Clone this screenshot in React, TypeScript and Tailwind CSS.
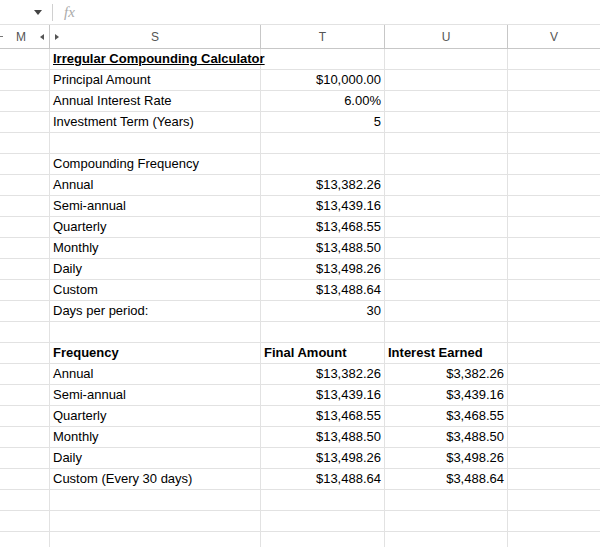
const rows: [string, string, string, boolean?][] = [
  ["Irregular Compounding Calculator", "", "", true],
  ["Principal Amount", "$10,000.00", ""],
  ["Annual Interest Rate", "6.00%", ""],
  ["Investment Term (Years)", "5", ""],
  ["", "", ""],
  ["Compounding Frequency", "", ""],
  ["Annual", "$13,382.26", ""],
  ["Semi-annual", "$13,439.16", ""],
  ["Quarterly", "$13,468.55", ""],
  ["Monthly", "$13,488.50", ""],
  ["Daily", "$13,498.26", ""],
  ["Custom", "$13,488.64", ""],
  ["Days per period:", "30", ""],
  ["", "", ""],
  ["Frequency", "Final Amount", "Interest Earned"],
  ["Annual", "$13,382.26", "$3,382.26"],
  ["Semi-annual", "$13,439.16", "$3,439.16"],
  ["Quarterly", "$13,468.55", "$3,468.55"],
  ["Monthly", "$13,488.50", "$3,488.50"],
  ["Daily", "$13,498.26", "$3,498.26"],
  ["Custom (Every 30 days)", "$13,488.64", "$3,488.64"],
  ["", "", ""],
  ["", "", ""],
  ["", "", ""],
];

export default function App() {
  return (
    <div className="w-[600px] h-[547px] overflow-hidden bg-white text-[13px] text-black" style={{ fontFamily: '"Liberation Sans", Arial, sans-serif' }}>
      <div className="h-[25px] flex items-center border-b border-[#e2e2e2]">
        <div className="w-[52px] flex justify-end pr-[10px]">
          <svg width="8" height="5" viewBox="0 0 8 5"><path d="M0 0h8L4 5z" fill="#444" /></svg>
        </div>
        <div className="w-px h-[17px] bg-[#d0d0d0]" />
        <span className="ml-[11px] text-[#aaa] italic text-[15px]" style={{ fontFamily: '"Liberation Serif", serif' }}>fx</span>
      </div>
      <div className="grid grid-cols-[50px_211px_124px_123px_1fr] h-[24px] text-[#555] text-[12px] border-b border-[#c7c7c7]">
        <div className="relative border-r border-[#c7c7c7] flex items-center">
          <span className="absolute left-0 top-[11px] w-[3px] h-px bg-[#777]" />
          <span className="ml-[16px]">M</span>
          <svg className="absolute left-[40px] top-[9px]" width="4" height="6" viewBox="0 0 4 6"><path d="M4 0v6L0 3z" fill="#555" /></svg>
        </div>
        <div className="relative border-r border-[#c7c7c7] flex items-center justify-center">
          <svg className="absolute left-[5px] top-[9px]" width="4" height="6" viewBox="0 0 4 6"><path d="M0 0v6l4-3z" fill="#555" /></svg>
          S
        </div>
        <div className="border-r border-[#c7c7c7] flex items-center justify-center">T</div>
        <div className="border-r border-[#c7c7c7] flex items-center justify-center">U</div>
        <div className="flex items-center justify-center">V</div>
      </div>
      {rows.map((r, i) => {
        const bold = i === 14;
        return (
          <div key={i} className="grid grid-cols-[50px_211px_124px_123px_1fr] h-[21px] border-b border-[#e2e2e2]">
            <div className="border-r border-[#e2e2e2]" />
            <div className={`border-r border-[#e2e2e2] pl-[3px] flex items-center whitespace-nowrap ${bold || r[3] ? "font-bold" : ""} ${r[3] ? "underline" : ""}`}>{r[0]}</div>
            <div className={`border-r border-[#e2e2e2] px-[3px] flex items-center ${bold ? "font-bold justify-start" : "justify-end"}`}>{r[1]}</div>
            <div className={`border-r border-[#e2e2e2] px-[3px] flex items-center ${bold ? "font-bold justify-start" : "justify-end"}`}>{r[2]}</div>
            <div />
          </div>
        );
      })}
    </div>
  );
}
